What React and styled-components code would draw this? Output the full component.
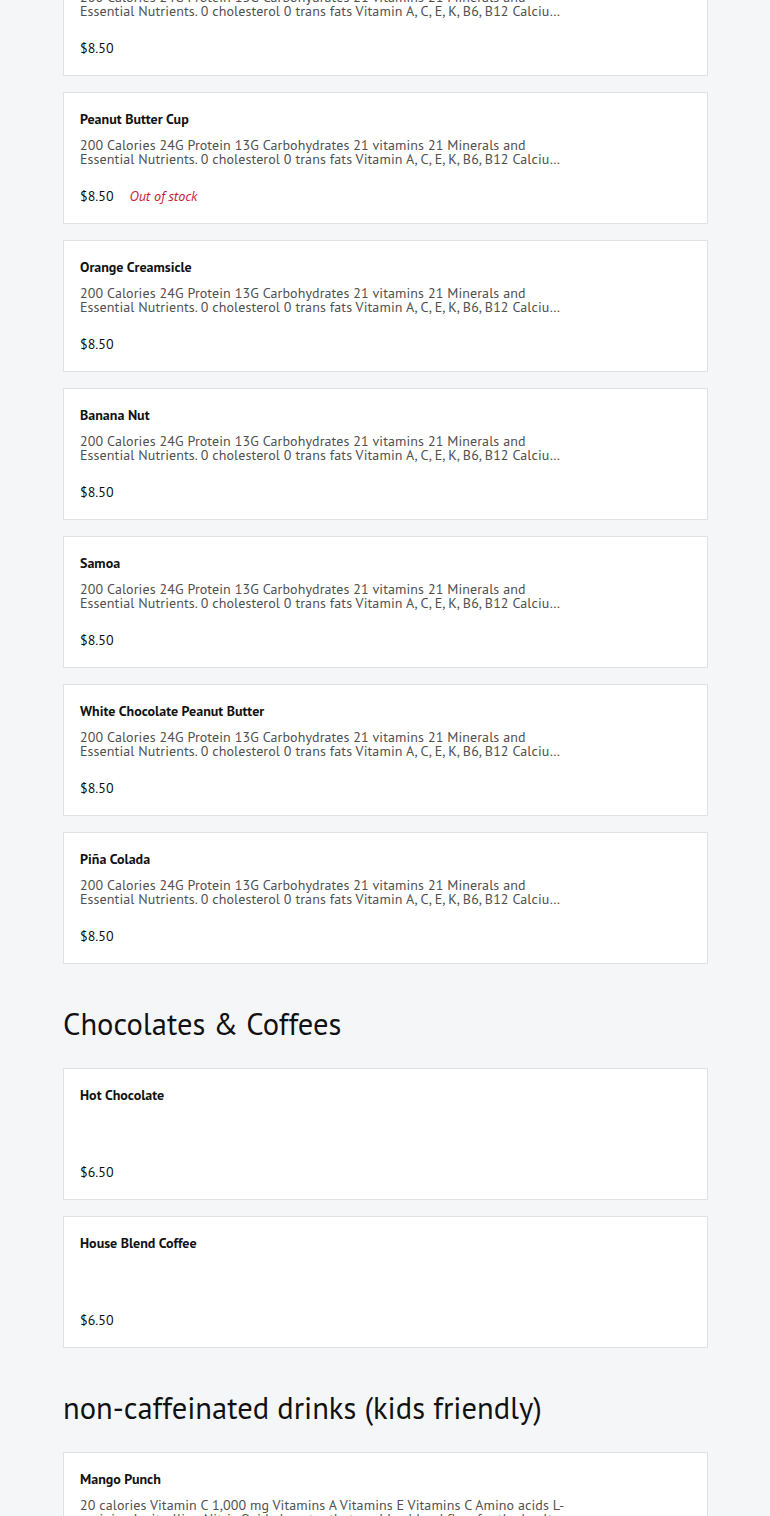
import React from 'react'
import styled, { createGlobalStyle } from 'styled-components'

const SHAKE = '200 Calories 24G Protein 13G Carbohydrates 21 vitamins 21 Minerals and Essential Nutrients. 0 cholesterol 0 trans fats Vitamin A, C, E, K, B6, B12 Calcium Iron Magnesium Zinc and more'

const sections = [
  {
    title: null,
    items: [
      { name: 'Cookies & Cream', desc: SHAKE, price: '$8.50' },
      { name: 'Peanut Butter Cup', desc: SHAKE, price: '$8.50', outOfStock: true },
      { name: 'Orange Creamsicle', desc: SHAKE, price: '$8.50' },
      { name: 'Banana Nut', desc: SHAKE, price: '$8.50' },
      { name: 'Samoa', desc: SHAKE, price: '$8.50' },
      { name: 'White Chocolate Peanut Butter', desc: SHAKE, price: '$8.50' },
      { name: 'Piña Colada', desc: SHAKE, price: '$8.50' },
    ],
  },
  {
    title: 'Chocolates & Coffees',
    items: [
      { name: 'Hot Chocolate', desc: '', price: '$6.50' },
      { name: 'House Blend Coffee', desc: '', price: '$6.50' },
    ],
  },
  {
    title: 'non-caffeinated drinks (kids friendly)',
    items: [
      {
        name: 'Mango Punch',
        desc: '20 calories Vitamin C 1,000 mg Vitamins A Vitamins E Vitamins C Amino acids L-arginine L-citrulline Nitric Oxide booster that enables blood flow for the health of your heart',
        price: '$6.50',
      },
    ],
  },
]

export default function App() {
  return (
    <>
      <GlobalStyle />
      <Page>
        {sections.map((section, i) => (
          <Section key={i}>
            {section.title && <Heading>{section.title}</Heading>}
            <List>
              {section.items.map((item) => (
                <MenuItem key={item.name} data={item} />
              ))}
            </List>
          </Section>
        ))}
      </Page>
    </>
  )
}

const MenuItem = ({ data }) => (
  <Card>
    <Name>{data.name}</Name>
    <Description>{data.desc}</Description>
    <PriceRow>
      <Price>{data.price}</Price>
      {data.outOfStock && <Stock>Out of stock</Stock>}
    </PriceRow>
  </Card>
)

/**
 * UI
 */
const GlobalStyle = createGlobalStyle`
  body {
    margin: 0;
    background: #f5f6f8;
    font-family: "PT Sans", "Liberation Sans Narrow", Roboto, sans-serif;
    color: #111;
  }
`

const Page = styled.div`
  width: 645px;
  margin: -56px auto 0;
  padding-left: 1px;
  display: flex;
  flex-direction: column;
  gap: 40px;
`

const Section = styled.section`
  display: flex;
  flex-direction: column;
  gap: 24px;
`

const Heading = styled.h2`
  margin: 0;
  font-size: 30.5px;
  line-height: 40px;
  font-weight: 400;
  color: #111;
`

const List = styled.div`
  display: flex;
  flex-direction: column;
  gap: 16px;
`

const Card = styled.div`
  box-sizing: border-box;
  height: 132px;
  padding: 16px;
  background: #fff;
  border: 1px solid #dfe1e5;
`

const Name = styled.div`
  font-size: 14px;
  line-height: 20px;
  font-weight: 700;
`

const Description = styled.p`
  margin: 9px 0 20px;
  max-width: 488px;
  height: 28px;
  font-size: 14px;
  line-height: 14px;
  letter-spacing: 0.1px;
  color: #505050;
  display: -webkit-box;
  -webkit-line-clamp: 2;
  -webkit-box-orient: vertical;
  overflow: hidden;
`

const PriceRow = styled.div`
  display: flex;
  gap: 16px;
  font-size: 14px;
  line-height: 20px;
`

const Price = styled.span`
  color: #111;
`

const Stock = styled.span`
  color: #c8202f;
  font-style: italic;
`
